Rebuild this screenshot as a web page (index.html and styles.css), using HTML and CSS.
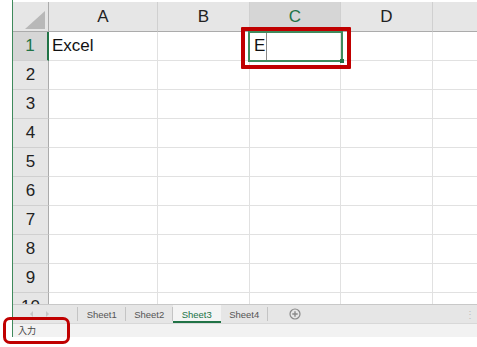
FILE: index.html
```html
<!DOCTYPE html>
<html>
<head>
<meta charset="utf-8">
<link rel="stylesheet" href="styles.css">
</head>
<body>
<div class="window">
  <div class="grid">
    <div class="corner"><span class="tri"></span></div>
    <div class="colh">A</div>
    <div class="colh">B</div>
    <div class="colh sel">C</div>
    <div class="colh">D</div>
    <div class="colh last"></div>

    <div class="rowh sel">1</div><div class="cell text">Excel</div><div class="cell"></div><div class="cell active"><span class="edit">E</span><span class="caret"></span></div><div class="cell"></div><div class="cell last"></div>
    <div class="rowh">2</div><div class="cell"></div><div class="cell"></div><div class="cell"></div><div class="cell"></div><div class="cell last"></div>
    <div class="rowh">3</div><div class="cell"></div><div class="cell"></div><div class="cell"></div><div class="cell"></div><div class="cell last"></div>
    <div class="rowh">4</div><div class="cell"></div><div class="cell"></div><div class="cell"></div><div class="cell"></div><div class="cell last"></div>
    <div class="rowh">5</div><div class="cell"></div><div class="cell"></div><div class="cell"></div><div class="cell"></div><div class="cell last"></div>
    <div class="rowh">6</div><div class="cell"></div><div class="cell"></div><div class="cell"></div><div class="cell"></div><div class="cell last"></div>
    <div class="rowh">7</div><div class="cell"></div><div class="cell"></div><div class="cell"></div><div class="cell"></div><div class="cell last"></div>
    <div class="rowh">8</div><div class="cell"></div><div class="cell"></div><div class="cell"></div><div class="cell"></div><div class="cell last"></div>
    <div class="rowh">9</div><div class="cell"></div><div class="cell"></div><div class="cell"></div><div class="cell"></div><div class="cell last"></div>
    <div class="rowh">10</div><div class="cell"></div><div class="cell"></div><div class="cell"></div><div class="cell"></div><div class="cell last"></div>
  </div>
  <div class="tabbar">
    <div class="nav"><span class="arrow left"></span><span class="arrow right"></span></div>
    <div class="tab">Sheet1</div>
    <div class="tab">Sheet2</div>
    <div class="tab active">Sheet3</div>
    <div class="tab">Sheet4</div>
    <div class="add">
      <svg width="12" height="12" viewBox="0 0 12 12"><circle cx="6" cy="6" r="5" fill="none" stroke="#8a8a8a" stroke-width="1.2"/><path d="M6 3.3v5.4M3.3 6h5.4" stroke="#8a8a8a" stroke-width="1.4"/></svg>
    </div>
    <div class="spacer"></div>
    <div class="vdots">⋮</div>
  </div>
  <div class="status">入力</div>
</div>
<div class="mark mark-cell"></div>
<div class="mark mark-status"></div>
</body>
</html>
```
FILE: styles.css
```css
html, body {
  margin: 0;
  padding: 0;
  background: #ffffff;
}
body {
  width: 477px;
  height: 347px;
  position: relative;
  overflow: hidden;
  font-family: "Liberation Sans", Arial, sans-serif;
}
.window {
  margin: 0 0 0 12px;
  padding-top: 2px;
  width: 465px;
  height: 337px;
  box-sizing: border-box;
  border-left: 1px solid #3f8a5c;
  border-bottom: 1px solid #3f8a5c;
  display: flex;
  flex-direction: column;
}
.grid {
  height: 302px;
  overflow: hidden;
  display: grid;
  grid-template-columns: 36px 109px 92px 91px 92px 1fr;
  grid-template-rows: 30px repeat(10, 29px);
  flex: none;
}
.grid > div {
  box-sizing: border-box;
}
.corner {
  background: #e6e6e6;
  border-right: 1px solid #ababab;
  border-bottom: 1px solid #ababab;
  position: relative;
}
.tri {
  position: absolute;
  right: 3px;
  bottom: 2px;
  width: 0;
  height: 0;
  border-left: 20px solid transparent;
  border-bottom: 18px solid #b8b8b8;
}
.colh {
  background: #e6e6e6;
  border-right: 1px solid #d0d0d0;
  border-bottom: 1px solid #ababab;
  display: flex;
  align-items: center;
  justify-content: center;
  font-size: 17px;
  color: #222;
  padding-top: 1px;
}
.colh.sel {
  background: #d6d6d6;
  color: #217346;
}
.colh.last { border-right: none; }
.rowh {
  background: #e6e6e6;
  border-right: 1px solid #ababab;
  border-bottom: 1px solid #d0d0d0;
  display: flex;
  align-items: center;
  justify-content: center;
  font-size: 17px;
  color: #222;
}
.rowh.sel {
  background: #d6d6d6;
  color: #217346;
  border-right: 2px solid #217346;
}
.cell {
  border-right: 1px solid #e1e1e1;
  border-bottom: 1px solid #e1e1e1;
}
.cell.last { border-right: none; }
.cell.text {
  font-size: 17px;
  color: #111;
  display: flex;
  align-items: center;
  padding-left: 3px;
}
.cell.active {
  position: relative;
  display: flex;
  align-items: center;
  padding-left: 4px;
  font-size: 17px;
  color: #111;
}
.cell.active::after {
  content: "";
  position: absolute;
  left: -2px;
  top: -1px;
  right: -3px;
  bottom: -2px;
  border: 2px solid #3f8a5c;
}
.cell.active::before {
  content: "";
  position: absolute;
  right: -4px;
  bottom: -3px;
  width: 4px;
  height: 4px;
  background: #217346;
  z-index: 2;
}
.caret {
  display: inline-block;
  width: 1px;
  height: 27px;
  background: #888;
  margin-left: 1px;
}
.tabbar {
  height: 19px;
  box-sizing: border-box;
  border-top: 1px solid #c8c8c8;
  background: #e6e6e6;
  display: flex;
  align-items: stretch;
  font-size: 9.5px;
  color: #555;
  flex: none;
}
.nav {
  width: 65px;
  box-sizing: border-box;
  border-right: 1px solid #c4c4c4;
  display: flex;
  align-items: center;
  gap: 13px;
  padding-left: 17px;
  margin: 2px 0;
}
.arrow {
  width: 0;
  height: 0;
  border-top: 3px solid transparent;
  border-bottom: 3px solid transparent;
}
.arrow.left { border-right: 3px solid #c6c6c6; }
.arrow.right { border-left: 3px solid #c6c6c6; }
.tab {
  width: 47.5px;
  box-sizing: border-box;
  display: flex;
  align-items: center;
  justify-content: center;
  position: relative;
}
.tab::after {
  content: "";
  position: absolute;
  right: 0;
  top: 2px;
  bottom: 2px;
  width: 1px;
  background: #c4c4c4;
}
.tab.active {
  background: #f4f4f4;
  color: #217346;
  border-bottom: 2px solid #217346;
  padding-top: 2px;
}
.tab.active::after { display: none; }
.add {
  width: 54px;
  display: flex;
  align-items: center;
  justify-content: center;
}
.spacer { flex: 1; }
.vdots {
  width: 14px;
  color: #c0c0c0;
  font-size: 10px;
  display: flex;
  align-items: center;
  justify-content: center;
}
.status {
  flex: 1;
  background: #f2f2f2;
  border-top: 1px solid #d8d8d8;
  font-family: "Noto Sans CJK JP", sans-serif;
  font-size: 9px;
  color: #444;
  padding-left: 5px;
  line-height: 13px;
}
.mark {
  position: absolute;
  border: 4px solid #c00000;
  box-sizing: border-box;
}
.mark-cell {
  left: 241px;
  top: 27px;
  width: 110px;
  height: 42px;
  border-radius: 1px;
}
.mark-status {
  left: 3px;
  top: 317px;
  width: 67px;
  height: 27px;
  border-width: 3.5px;
  border-radius: 7px;
}
```
